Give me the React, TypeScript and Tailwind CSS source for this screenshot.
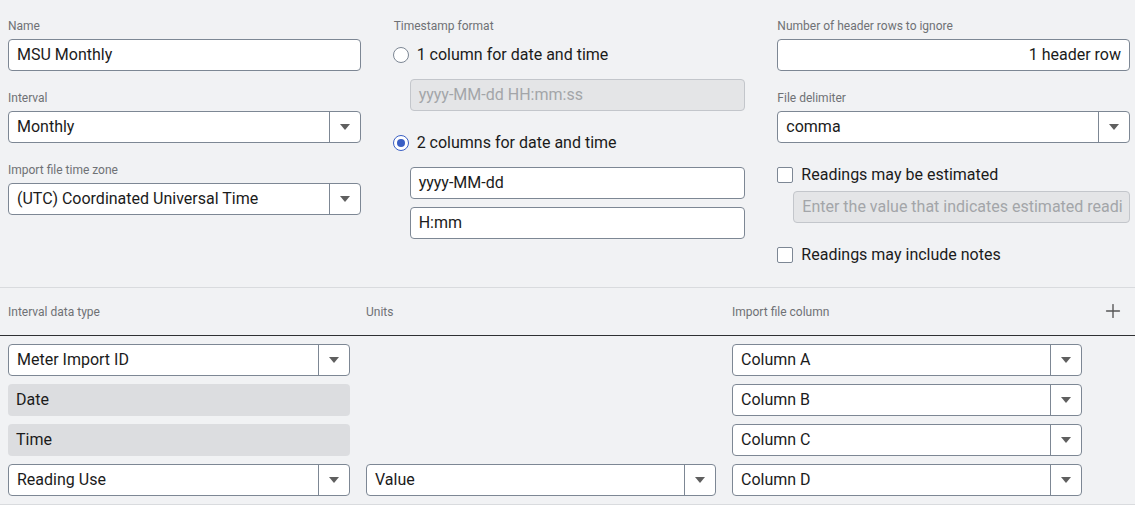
import React from 'react';
import { Plus } from 'lucide-react';

function Label({ children }: { children: React.ReactNode }) {
  return <div className="text-xs leading-4 text-[#6f7175] mb-[5px]">{children}</div>;
}

function TextInput({ value, align = 'left' }: { value: string; align?: 'left' | 'right' }) {
  return (
    <div
      className={`h-8 bg-white border border-[#7d8794] rounded flex items-center px-2 text-base text-[#1b1b1b] ${
        align === 'right' ? 'justify-end' : ''
      }`}
    >
      {value}
    </div>
  );
}

function DisabledInput({ placeholder }: { placeholder: string }) {
  return (
    <div className="h-8 bg-[#e4e5e7] border border-[#c3c6cb] rounded flex items-center px-2 text-base text-[#a3a5a9] whitespace-nowrap overflow-hidden">
      {placeholder}
    </div>
  );
}

function Select({ value }: { value: string }) {
  return (
    <div className="h-8 bg-white border border-[#7d8794] rounded flex items-stretch text-base text-[#1b1b1b]">
      <div className="flex-1 flex items-center px-2 whitespace-nowrap overflow-hidden">{value}</div>
      <div className="w-[31px] border-l border-[#7d8794] flex items-center justify-center">
        <svg width="10" height="6" viewBox="0 0 10 6">
          <path d="M0 0h10L5 6z" fill="#5f5f5f" />
        </svg>
      </div>
    </div>
  );
}

function Radio({ checked, label }: { checked?: boolean; label: string }) {
  return (
    <div className="h-6 flex items-center gap-2 text-base text-[#1b1b1b]">
      <span
        className={`w-4 h-4 rounded-full border bg-white flex items-center justify-center ${
          checked ? 'border-[#3a5fc4]' : 'border-[#7d8794]'
        }`}
      >
        {checked && <span className="w-2 h-2 rounded-full bg-[#3a5fc4]" />}
      </span>
      {label}
    </div>
  );
}

function Checkbox({ label }: { label: string }) {
  return (
    <div className="h-6 flex items-center gap-2 text-base text-[#1b1b1b]">
      <span className="w-4 h-4 rounded-[2px] border border-[#7d8794] bg-white" />
      {label}
    </div>
  );
}

function GrayCell({ value }: { value: string }) {
  return (
    <div className="h-8 bg-[#dcdde0] rounded flex items-center px-2 text-base text-[#1b1b1b]">{value}</div>
  );
}

export default function App() {
  const rows = [
    { type: 'select', name: 'Meter Import ID', unit: '', column: 'Column A' },
    { type: 'fixed', name: 'Date', unit: '', column: 'Column B' },
    { type: 'fixed', name: 'Time', unit: '', column: 'Column C' },
    { type: 'select', name: 'Reading Use', unit: 'Value', column: 'Column D' },
  ];

  return (
    <div className="w-[1135px] h-[505px] bg-[#f1f2f4] overflow-hidden" style={{ fontFamily: 'Roboto, "Noto Sans", sans-serif' }}>
      {/* settings */}
      <div className="grid grid-cols-3 gap-x-8 pl-2 pr-[5px] pt-[18px] h-[288px] border-b border-[#d9dbde]">
        <div>
          <Label>Name</Label>
          <TextInput value="MSU Monthly" />
          <div className="mt-[19px]">
            <Label>Interval</Label>
            <Select value="Monthly" />
          </div>
          <div className="mt-[19px]">
            <Label>Import file time zone</Label>
            <Select value="(UTC) Coordinated Universal Time" />
          </div>
        </div>

        <div>
          <div className="text-xs leading-4 text-[#6f7175] pl-px">Timestamp format</div>
          <div className="mt-[9px]">
            <Radio label="1 column for date and time" />
          </div>
          <div className="mt-3 pl-[17px]">
            <DisabledInput placeholder="yyyy-MM-dd HH:mm:ss" />
          </div>
          <div className="mt-5">
            <Radio checked label="2 columns for date and time" />
          </div>
          <div className="mt-3 pl-[17px] flex flex-col gap-2">
            <TextInput value="yyyy-MM-dd" />
            <TextInput value="H:mm" />
          </div>
        </div>

        <div>
          <Label>Number of header rows to ignore</Label>
          <TextInput value="1 header row" align="right" />
          <div className="mt-[19px]">
            <Label>File delimiter</Label>
            <Select value="comma" />
          </div>
          <div className="mt-5">
            <Checkbox label="Readings may be estimated" />
          </div>
          <div className="mt-1 pl-4">
            <DisabledInput placeholder="Enter the value that indicates estimated readi" />
          </div>
          <div className="mt-5">
            <Checkbox label="Readings may include notes" />
          </div>
        </div>
      </div>

      {/* column mapping */}
      <div className="grid grid-cols-[342px_350px_350px] gap-x-4 pl-2 h-[48px] items-center border-b border-[#2f3133] relative text-xs text-[#6f7175]">
        <div>Interval data type</div>
        <div>Units</div>
        <div>Import file column</div>
        <Plus className="absolute right-[11px] top-[12px] w-[22px] h-[22px] text-[#555]" strokeWidth={1.5} />
      </div>

      <div className="grid grid-cols-[342px_350px_350px] gap-x-4 gap-y-2 pl-2 pt-2 pb-2 border-b border-[#d9dbde]">
        {rows.map((r) => (
          <React.Fragment key={r.name}>
            {r.type === 'select' ? <Select value={r.name} /> : <GrayCell value={r.name} />}
            {r.unit ? <Select value={r.unit} /> : <div />}
            <Select value={r.column} />
          </React.Fragment>
        ))}
      </div>
    </div>
  );
}
